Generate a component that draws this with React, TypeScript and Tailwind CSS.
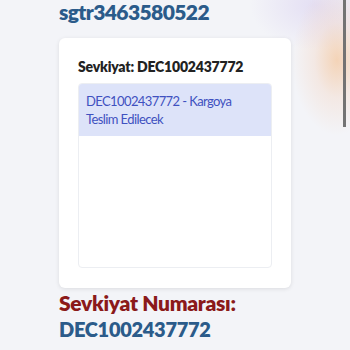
import React from "react";

export default function App() {
  return (
    <div
      className="relative w-[350px] h-[350px] overflow-hidden bg-[#f3f4f8]"
      style={{ fontFamily: "Lato, 'Noto Sans', sans-serif" }}
    >
      <div className="pointer-events-none absolute left-[250px] -top-[40px] w-[130px] h-[90px] rounded-full bg-[radial-gradient(closest-side,rgba(215,205,240,0.55),rgba(243,244,248,0))]" />
      <div className="pointer-events-none absolute left-[292px] -top-[15px] w-[90px] h-[150px] rounded-full bg-[radial-gradient(closest-side,rgba(244,190,140,0.6),rgba(244,205,180,0.3)_50%,rgba(243,244,248,0))]" />
      <div className="absolute z-20 top-0 left-[343px] w-[3px] h-[127px] bg-[#737373]" />
      <div className="relative flex flex-col pl-[59px] w-[291px]">
        <h1 className="-mt-[2px] text-[21px] leading-[28px] font-extrabold text-[#2b5b8a] tracking-[-0.6px]">
          sgtr3463580522
        </h1>
        <div className="mt-[12px] bg-white rounded-md shadow-[0_1px_4px_rgba(0,0,0,0.10)] px-[19px] pt-[19px] pb-[20px]">
          <div className="text-[14px] leading-[20px] font-extrabold text-[#222] tracking-[-0.2px]">
            Sevkiyat: DEC1002437772
          </div>
          <div className="mt-[6px] h-[185px] rounded border border-[#eceef2] overflow-hidden">
            <div className="bg-[#dde3f9] px-[7px] py-[8px] text-[13px] leading-[18px] text-[#3f51c0] tracking-[-0.6px]">
              DEC1002437772 - Kargoya
              <br />
              Teslim Edilecek
            </div>
          </div>
        </div>
        <div className="mt-[1px] text-[21px] leading-[27px] font-extrabold text-[#8b1a1a] tracking-[-0.3px]">
          Sevkiyat Numarası:
        </div>
        <div className="text-[20px] leading-[27px] font-extrabold text-[#2b5b8a] tracking-[-0.3px]">
          DEC1002437772
        </div>
      </div>
    </div>
  );
}
